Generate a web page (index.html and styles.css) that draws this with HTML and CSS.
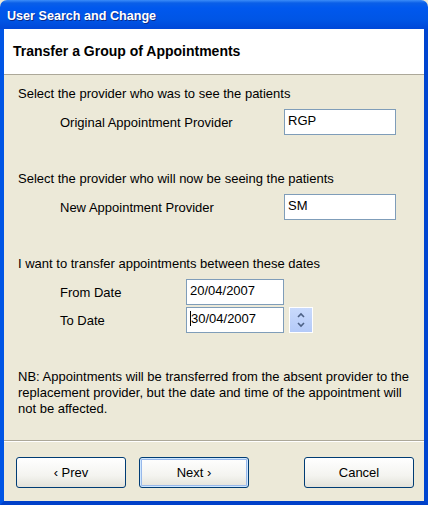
FILE: index.html
```html
<!DOCTYPE html>
<html>
  <head>
    <meta charset="utf-8">
    <link rel="stylesheet" href="styles.css">
  </head>
  <body>
    <div id="window">
      <div class="titlebar">User Search and Change</div>
      <div class="frame">
        <div class="header">
          <h1>Transfer a Group of Appointments</h1>
        </div>
        <div class="content">
          <p class="prompt">Select the provider who was to see the patients</p>
          <div class="row">
            <span class="label provider-label">Original Appointment Provider</span>
            <div class="field wide">RGP</div>
          </div>

          <p class="prompt">Select the provider who will now be seeing the patients</p>
          <div class="row">
            <span class="label provider-label">New Appointment Provider</span>
            <div class="field wide">SM</div>
          </div>

          <p class="prompt">I want to transfer appointments between these dates</p>
          <div class="row">
            <span class="label date-label">From Date</span>
            <div class="field date">20/04/2007</div>
          </div>
          <div class="row row-tight">
            <span class="label date-label">To Date</span>
            <div class="field date"><span class="caret"></span>30/04/2007</div>
            <div class="spinner">
              <svg width="10" height="6" viewBox="0 0 10 6"><path d="M2 5 L5 2 L8 5" fill="none" stroke="#4d6185" stroke-width="1.6"/></svg>
              <svg width="10" height="6" viewBox="0 0 10 6"><path d="M2 1 L5 4 L8 1" fill="none" stroke="#4d6185" stroke-width="1.6"/></svg>
            </div>
          </div>

          <p class="note">NB: Appointments will be transferred from the absent provider to the replacement provider, but the date and time of the appointment will not be affected.</p>
        </div>
        <div class="buttons">
          <button class="btn">&lsaquo; Prev</button>
          <button class="btn focused">Next &rsaquo;</button>
          <span class="spacer"></span>
          <button class="btn">Cancel</button>
        </div>
      </div>
    </div>
  </body>
</html>
```

FILE: styles.css
```css
html, body {
  margin: 0;
  padding: 0;
  background: #ece9d8;
}

body {
  font-family: "Liberation Sans", Arial, sans-serif;
  font-size: 13px;
  color: #000;
}

#window {
  width: 428px;
  height: 505px;
  display: flex;
  flex-direction: column;
  box-sizing: border-box;
}

.titlebar {
  height: 29px;
  flex: none;
  box-sizing: border-box;
  padding: 9px 0 0 7px;
  border-radius: 7px 7px 0 0;
  background: linear-gradient(#3b8cf8 0, #0a5fe8 3px, #0058ee 8px, #0055e5 20px, #0048d8 29px);
  color: #fff;
  font-weight: bold;
  font-size: 12.6px;
  text-shadow: 1px 1px #0b2b8a;
}

.frame {
  flex: 1;
  display: flex;
  flex-direction: column;
  border: 4px solid #0055e5;
  border-top: 0;
  border-right-color: #0045d0;
  border-bottom-color: #0040c8;
}

.header {
  height: 46px;
  flex: none;
  background: #fff;
  border-bottom: 1px solid #aca899;
  box-sizing: border-box;
}

.header h1 {
  margin: 0;
  padding: 14px 0 0 9px;
  font-size: 14px;
  font-weight: bold;
}

.content {
  flex: 1;
  padding: 11px 0 0 14px;
  border-bottom: 1px solid #aca899;
  box-shadow: 0 1px 0 #fff;
}

.prompt {
  margin: 0;
  line-height: 16px;
}

.row {
  display: flex;
  align-items: center;
  margin: 7px 0 36px 0;
  height: 26px;
}

.row + .row-tight {
  margin-top: -34px;
}

.label {
  padding-left: 42px;
}

.provider-label {
  width: 224px;
}

.date-label {
  width: 126px;
}

.field {
  height: 26px;
  box-sizing: border-box;
  border: 1px solid #7f9db9;
  background: #fff;
  padding: 3px 3px;
  line-height: 16px;
  display: flex;
  align-items: flex-start;
}

.wide {
  width: 112px;
}

.date {
  width: 98px;
}

.caret {
  display: inline-block;
  width: 1px;
  height: 15px;
  background: #000;
}

.spinner {
  width: 24px;
  height: 26px;
  margin-left: 5px;
  box-sizing: border-box;
  border: 1px solid #fff;
  background: linear-gradient(#c9dafc, #b4caf8);
  display: flex;
  flex-direction: column;
  align-items: center;
  justify-content: center;
  gap: 4px;
}

.note {
  margin: 0;
  padding-right: 4px;
  line-height: 16px;
}

.buttons {
  height: 60px;
  flex: none;
  display: flex;
  align-items: flex-start;
  padding: 16px 10px 0 12px;
  gap: 13px;
  box-sizing: border-box;
}

.spacer {
  flex: 1;
}

.btn {
  width: 110px;
  height: 31px;
  font-family: "Liberation Sans", Arial, sans-serif;
  font-size: 13px;
  color: #000;
  border: 1px solid #003c74;
  border-radius: 3px;
  background: linear-gradient(#ffffff, #f4f4f0 60%, #e3e2da);
  padding: 0;
}

.focused {
  box-shadow: inset 0 0 0 1px #cee7ff, inset 0 0 0 2px #98b8ea;
}
```
